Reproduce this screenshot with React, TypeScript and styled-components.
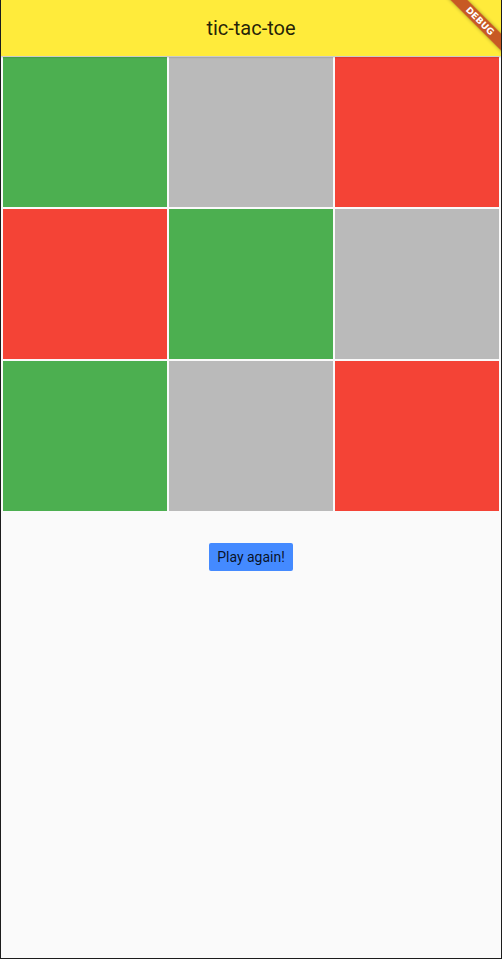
import React from "react";
import styled, { createGlobalStyle } from "styled-components";

const GlobalStyle = createGlobalStyle`
  html, body {
    margin: 0;
    padding: 0;
    background: #fafafa;
  }
  * { box-sizing: border-box; }
`;

const Frame = styled.div`
  position: relative;
  width: 502px;
  height: 959px;
  border: 1px solid #1c1c1c;
  border-top: none;
  background: #fafafa;
  font-family: Roboto, "Liberation Sans", sans-serif;
  overflow: hidden;
  display: flex;
  flex-direction: column;
`;

const AppBar = styled.header`
  position: relative;
  z-index: 1;
  height: 56px;
  flex: 0 0 56px;
  background: #ffeb3b;
  box-shadow: 0 1px 2px rgba(0, 0, 0, 0.28);
  display: flex;
  align-items: center;
  justify-content: center;
`;

const Title = styled.h1`
  margin: 0;
  font-size: 20px;
  font-weight: 400;
  color: rgba(0, 0, 0, 0.87);
  line-height: 1;
`;

const Board = styled.div`
  display: grid;
  grid-template-columns: repeat(3, 1fr);
  grid-auto-rows: 150px;
  gap: 2px;
  padding: 1px 2px 0;
  background: #fafafa;
`;

type CellKind = "x" | "o" | "empty";

const cellColors: Record<CellKind, string> = {
  x: "#4caf50",
  o: "#f44336",
  empty: "#bababa",
};

const Cell = styled.div<{ $kind: CellKind }>`
  background: ${(p) => cellColors[p.$kind]};
`;

const Actions = styled.div`
  display: flex;
  justify-content: center;
  padding-top: 32px;
`;

const PlayButton = styled.button`
  height: 28px;
  width: 84px;
  padding: 0;
  border: none;
  border-radius: 2px;
  background: #448aff;
  color: rgba(0, 0, 0, 0.87);
  font-family: Roboto, "Liberation Sans", sans-serif;
  font-size: 14px;
  font-weight: 400;
  cursor: pointer;
`;

const BannerCorner = styled.div`
  position: absolute;
  top: 0;
  right: 0;
  width: 60px;
  height: 60px;
  overflow: hidden;
  pointer-events: none;
  z-index: 5;
`;

const Ribbon = styled.div`
  position: absolute;
  left: -10.9px;
  top: 14.9px;
  width: 100px;
  height: 12px;
  transform: rotate(45deg);
  background: rgba(180, 40, 30, 0.75);
  box-shadow: 0 0 4px rgba(0, 0, 0, 0.35);
  display: flex;
  align-items: center;
  justify-content: center;
  color: #ffffff;
  font-family: "DejaVu Sans", "Liberation Sans", sans-serif;
  font-size: 9px;
  font-weight: 900;
  letter-spacing: 0.1px;
  line-height: 1;
`;

const board: CellKind[] = [
  "x", "empty", "o",
  "o", "x", "empty",
  "x", "empty", "o",
];

export default function App() {
  return (
    <>
      <GlobalStyle />
      <Frame>
        <AppBar>
          <Title>tic-tac-toe</Title>
        </AppBar>
        <Board>
          {board.map((k, i) => (
            <Cell key={i} $kind={k} />
          ))}
        </Board>
        <Actions>
          <PlayButton>Play again!</PlayButton>
        </Actions>
        <BannerCorner>
          <Ribbon>DEBUG</Ribbon>
        </BannerCorner>
      </Frame>
    </>
  );
}
